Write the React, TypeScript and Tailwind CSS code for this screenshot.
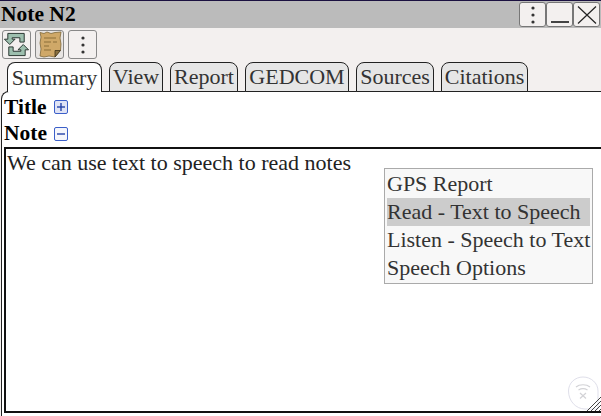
import { useState } from "react";

const tabs = [
  { label: "Summary", width: "w-[95px]" },
  { label: "View", width: "w-[54px]" },
  { label: "Report", width: "w-[68px]" },
  { label: "GEDCOM", width: "w-[104px]" },
  { label: "Sources", width: "w-[78px]" },
  { label: "Citations", width: "w-[87px]" },
];
const menuItems = ["GPS Report", "Read - Text to Speech", "Listen - Speech to Text", "Speech Options"];

function DotsIcon() {
  return (
    <svg width="6" height="20" viewBox="0 0 6 20" fill="#333">
      <circle cx="3" cy="3" r="1.6" />
      <circle cx="3" cy="10" r="1.6" />
      <circle cx="3" cy="17" r="1.6" />
    </svg>
  );
}

function RefreshIcon() {
  return (
    <svg width="27" height="27" viewBox="0 0 28 28" fill="#9dbfae" stroke="#26332e" strokeWidth="1">
      <path d="M5 2.500H22V11.500H17.500V7H9.500V8.500H12.500L7 14L1.500 8.500H5Z" />
      <path d="M23 25.500H6V16.500H10.500V21H18.500V19.500H15.500L21 14L26.500 19.500H23Z" />
    </svg>
  );
}

function NoteIcon() {
  return (
    <svg width="24" height="27" viewBox="0 0 24 27">
      <path
        d="M2 1.500L6 2.500L9 1L13 2.500L17 1.500L23 1L22 7L23 13L22.500 19L17 26L11 25L6 26L2 25L3 18L2 12L3 6Z"
        fill="#cfa868"
        stroke="#7d6738"
        strokeWidth="0.8"
      />
      <path d="M17 26L17 19.500L22.500 19.500Z" fill="#8a7140" stroke="#3c3118" strokeWidth="0.8" />
      <path d="M6 7H18M6 11H13M15 11H19M6 15H11M6 19H13" stroke="#8b6f38" strokeWidth="1.200" />
    </svg>
  );
}

// the faint speech badge over the note's corner
function SpeechBadge() {
  return (
    <svg width="32" height="34" viewBox="0 0 32 34" fill="none" stroke="#dfdfea" strokeWidth="1" className="absolute right-[2px] bottom-[1px]">
      <path d="M16 1C8 1 1.500 7 1.500 15C1.500 25 9 33 18 33H31V15C31 7 24 1 16 1Z" />
      <path d="M9 11C12.500 8 19.500 8 23 11M11.500 14C14 12.500 18 12.500 20.500 14" stroke="#d2d2d6" strokeWidth="1.200" />
      <path d="M13 17L19 22.500M19 17L13 22.500" stroke="#d2d2d6" strokeWidth="1.200" />
    </svg>
  );
}

function ExpandBox({ sign }: { sign: "+" | "-" }) {
  return (
    <span
      className={`ml-[7px] inline-flex h-[14px] w-[14px] items-center justify-center rounded-[2px] border border-[#3b5fc9] ${
        sign === "+" ? "bg-[#dfe3f5]" : "bg-[#f5f6fb]"
      }`}
    >
      <svg width="10" height="10" viewBox="0 0 10 10" stroke="#2442a8" strokeWidth="1.400">
        <path d="M1 5H9" />
        {sign === "+" && <path d="M5 1V9" />}
      </svg>
    </span>
  );
}

export default function App() {
  const [activeTab, setActiveTab] = useState("Summary");

  return (
    <div className="relative flex h-[416px] w-[601px] flex-col overflow-hidden border-t border-[#1a1040] bg-[#f3f0ef] font-['Liberation_Serif',serif] text-[22px] text-[#222]">
      {/* Title bar */}
      <div className="flex h-[27px] shrink-0 items-start justify-between bg-[#bbbbbb] pr-[1px] pl-[1px]">
        <span className="text-[21.5px] leading-[27px] font-bold text-black">Note N2</span>
        <div className="flex pt-[1px]">
          <button className="flex h-[25px] w-[27px] items-center justify-center rounded-[3px] border border-[#777] bg-[#f3f0ef]">
            <DotsIcon />
          </button>
          <button className="flex h-[25px] w-[27px] items-end justify-center rounded-[3px] border border-[#777] bg-[#f3f0ef] pb-[3px]">
            <span className="block h-[2px] w-[18px] bg-[#444]" />
          </button>
          <button className="flex h-[25px] w-[27px] items-center justify-center rounded-[3px] border border-[#777] bg-[#f3f0ef]">
            <svg width="20" height="20" viewBox="0 0 20 20" stroke="#222" strokeWidth="1.200">
              <path d="M1 1.500L19 18.500M19 1.500L1 18.500" />
            </svg>
          </button>
        </div>
      </div>

      {/* Toolbar */}
      <div className="flex h-[34px] shrink-0 items-start gap-[4px] pt-[2px] pl-[2px]">
        <button className="flex h-[29px] w-[29px] items-center justify-center rounded-[3px] border border-[#888] bg-[#f3f0ef]">
          <RefreshIcon />
        </button>
        <button className="flex h-[29px] w-[29px] items-center justify-center rounded-[3px] border border-[#888] bg-[#e8e5e3]">
          <NoteIcon />
        </button>
        <button className="flex h-[29px] w-[29px] items-center justify-center rounded-[3px] border border-[#888] bg-[#f3f0ef]">
          <DotsIcon />
        </button>
      </div>

      {/* Tabs */}
      <div className="z-10 -mb-[1px] flex h-[30px] shrink-0 items-start gap-[7px] pl-[7px]">
        {tabs.map((tab) => (
          <button
            key={tab.label}
            onClick={() => setActiveTab(tab.label)}
            className={`h-[30px] rounded-t-[8px] border border-[#222] text-center leading-[28px] whitespace-nowrap text-[#333] ${tab.width} ${
              activeTab === tab.label ? "border-b-0 bg-white" : "bg-[#e6e6e6]"
            }`}
          >
            {tab.label}
          </button>
        ))}
      </div>

      {/* Panel */}
      <div className="ml-[1px] flex flex-1 flex-col rounded-tl-[8px] border-t border-l border-[#222] bg-white pl-[2px]">
        <div className="flex h-[28px] shrink-0 items-center pt-[2px] text-[21.5px] font-bold text-black">
          Title
          <ExpandBox sign="+" />
        </div>
        <div className="flex h-[27px] shrink-0 items-center text-[21.5px] font-bold text-black">
          Note
          <ExpandBox sign="-" />
        </div>
        <div className="relative mb-[3px] flex-1 border-2 border-r-0 border-[#111] pl-[1px] leading-[28px] text-[#222]">
          We can use text to speech to read notes
          <SpeechBadge />
        </div>
      </div>

      {/* Context menu */}
      <div className="absolute top-[167px] left-[384px] w-[209px] border border-[#aaa] bg-[#f8f8f8] px-[2px] py-[1px] leading-[28px] whitespace-nowrap text-[#333]">
        {menuItems.map((item, i) => (
          <div key={item} className={i === 1 ? "h-[28px] bg-[#cccccc]" : "h-[28px]"}>
            {item}
          </div>
        ))}
      </div>

      {/* Resize grip */}
      <svg width="14" height="14" viewBox="0 0 14 14" stroke="#444" strokeWidth="1" className="absolute right-0 bottom-[5px]">
        <path d="M0 14L14 0M4 14L14 4M8 14L14 8M12 14L14 12" />
      </svg>
    </div>
  );
}
